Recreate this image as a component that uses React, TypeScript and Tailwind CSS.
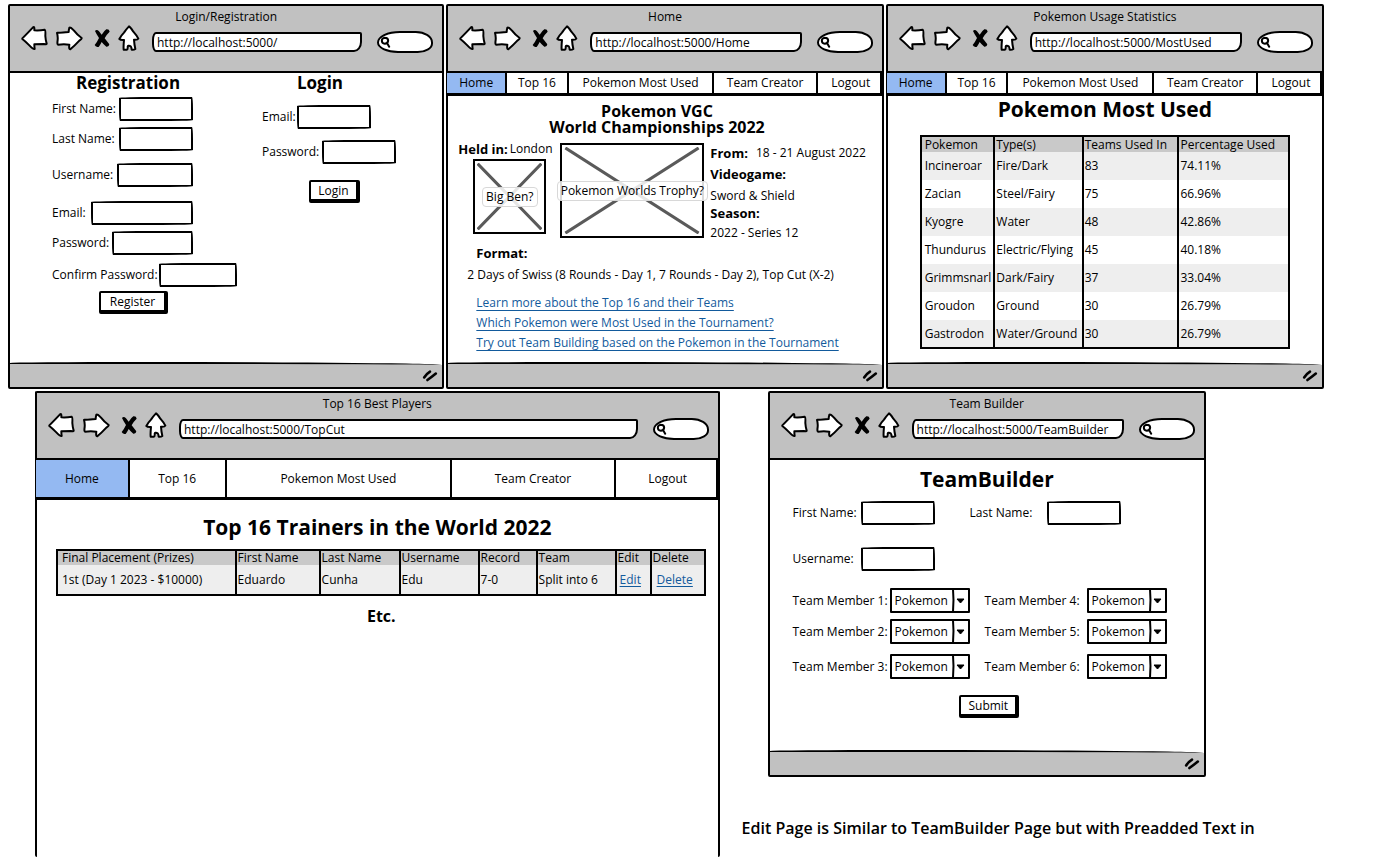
import React, { useId } from "react";

const SKETCH = "rounded-[50%_1px_50%_1px/1px_50%_1px_50%]";

function BackIcon() {
  return (
    <svg viewBox="63 75 81 78" className="h-[26px] w-[27px]" fill="#fff" stroke="#000" strokeWidth="6" strokeLinejoin="round" aria-hidden="true">
      <path d="M67 115 Q86 96 99 82 Q104 78 103 91 Q120 92 134 89 Q137 90 136 108 Q137 122 140 131 Q140 134 132 132 L103 133 Q103 140 104 147 Q100 149 88 136 Q76 124 67 117 Z" />
    </svg>
  );
}

function ForwardIcon() {
  return (
    <svg viewBox="168 75 81 78" className="h-[26px] w-[27px]" fill="#fff" stroke="#000" strokeWidth="6" strokeLinejoin="round" aria-hidden="true">
      <path d="M172 98 Q180 99 206 96 Q206 90 208 83 Q211 80 222 92 Q232 105 245 114 Q246 117 238 122 Q224 137 211 148 Q206 149 208 134 Q192 132 174 134 Q171 134 173 120 Q174 108 171 99 Z" />
    </svg>
  );
}

function StopIcon() {
  return (
    <svg viewBox="282 84 48 54" className="h-[18px] w-4" aria-hidden="true">
      <path d="M285 90 Q290 83 297 91 L305 101 Q312 90 319 85 Q328 84 329 92 Q320 100 314 112 Q321 121 328 130 Q327 138 319 137 Q311 131 305 123 Q300 133 296 138 Q287 139 284 132 Q291 124 297 111 Q289 99 285 90 Z" />
    </svg>
  );
}

function HomeIcon() {
  return (
    <svg viewBox="354 75 66 78" className="h-[26px] w-[22px]" fill="#fff" stroke="#000" strokeWidth="6" strokeLinejoin="round" aria-hidden="true">
      <path d="M387 79 Q392 82 400 95 Q410 106 415 116 Q413 120 402 119 Q403 135 406 147 Q402 150 395 149 Q394 138 390 138 Q384 136 383 140 Q384 148 380 149 L371 149 Q370 140 372 120 Q362 121 358 117 Q364 106 372 98 Q380 86 387 79 Z" />
    </svg>
  );
}

function ResizeGrip() {
  return (
    <svg viewBox="0 0 48 40" className="h-[13px] w-4" stroke="#000" strokeWidth="8" strokeLinecap="round" aria-hidden="true">
      <path d="M6 26 Q14 14 24 8 M16 34 Q30 24 42 14" fill="none" />
    </svg>
  );
}

type BrowserProps = {
  title: string;
  url: string;
  footer?: boolean;
  children: React.ReactNode;
};

function BrowserWindow({ title, url, footer = true, children }: BrowserProps) {
  return (
    <section className={`flex min-w-0 flex-col rounded-[2px] border-2 border-black bg-white ${footer ? "" : "border-b-0"}`}>
      <header className="border-b-2 border-black bg-[#c1c1c1] pb-5">
        <div className="pt-[3px] text-center leading-4">{title}</div>
        <div className="flex h-[26px] items-center pl-[11px] pr-[9px]">
          <button aria-label="Back" className="mr-2"><BackIcon /></button>
          <button aria-label="Forward" className="mr-[11px]"><ForwardIcon /></button>
          <button aria-label="Stop" className="mr-2"><StopIcon /></button>
          <button aria-label="Home" className="mr-3"><HomeIcon /></button>
          <input
            aria-label="Address"
            defaultValue={url}
            className="mr-[15px] mt-2 h-5 min-w-0 flex-1 rounded-[4px_2px_8px_4px/8px_2px_10px_8px] border-2 border-black bg-white pl-[3px] outline-none"
          />
          <div className="mt-2 flex h-[22px] w-14 items-center rounded-[24px_18px_16px_22px/12px_12px_10px_11px] border-2 border-black bg-white pl-px">
            <svg viewBox="0 0 32 36" className="h-3 w-[11px] shrink-0" fill="none" stroke="#000" strokeWidth="6" strokeLinecap="round" aria-hidden="true">
              <path d="M14 5 Q24 5 24 14 Q23 23 14 23 Q5 22 5 14 Q5 6 14 5 M21 22 L27 32" />
            </svg>
            <input aria-label="Search" className="w-9 min-w-0 bg-transparent outline-none" />
          </div>
        </div>
      </header>
      <div className="flex-1">{children}</div>
      {footer && (
        <footer className="flex h-[25px] items-center justify-end rounded-[30%_70%_0_0/1px_3px_0_0] border-t-2 border-black bg-[#c1c1c1] pr-1">
          <ResizeGrip />
        </footer>
      )}
    </section>
  );
}

const NAV_ITEMS = ["Home", "Top 16", "Pokemon Most Used", "Team Creator", "Logout"];

function NavBar({ large = false }: { large?: boolean }) {
  const size = large
    ? "h-10 grid-cols-[94fr_97fr_226fr_164fr_100fr]"
    : "h-[23px] grid-cols-[60fr_62fr_146fr_104fr_62fr]";
  return (
    <nav className={`-mx-[2px] grid divide-x-2 divide-black border-b-[3px] border-l border-r-4 border-black bg-white ${size}`}>
      {NAV_ITEMS.map((item) => (
        <a key={item} href="#" className={`flex items-center justify-center whitespace-nowrap last:pl-1 ${item === "Home" ? "bg-[#94b9f2]" : ""}`}>
          {item}
        </a>
      ))}
    </nav>
  );
}

type FieldProps = { label: string; labelClass: string; inputClass: string; className?: string; type?: string };

function Field({ label, labelClass, inputClass, className = "", type = "text" }: FieldProps) {
  const id = useId();
  return (
    <div className={`flex items-center ${className}`}>
      <label htmlFor={id} className={`shrink-0 whitespace-nowrap ${labelClass}`}>{label}</label>
      <input id={id} type={type} className={`h-6 shrink-0 border-2 border-black bg-white px-1 outline-none ${SKETCH} ${inputClass}`} />
    </div>
  );
}

function SketchButton({ children, className }: { children: string; className: string }) {
  return (
    <button className={`h-[23px] rounded-[2px] border-2 border-b-4 border-r-4 border-black bg-white leading-4 ${className}`}>
      {children}
    </button>
  );
}

function LoginWindow() {
  return (
    <BrowserWindow title="Login/Registration" url="http://localhost:5000/">
      <div className="flex">
        <form className="w-[252px] shrink-0 pl-[42px]">
          <h2 className="w-[152px] text-center text-[17px] font-bold leading-5">Registration</h2>
          <Field label="First Name:" labelClass="w-[67px]" inputClass="w-[74px]" className="mt-1" />
          <Field label="Last Name:" labelClass="w-[67px]" inputClass="w-[74px]" className="mt-[6px]" />
          <Field label="Username:" labelClass="w-[65px]" inputClass="w-[76px]" className="mt-3" />
          <Field label="Email:" labelClass="w-[39px]" inputClass="w-[102px]" className="mt-[14px]" />
          <Field label="Password:" labelClass="w-[60px]" inputClass="w-[81px]" className="mt-[6px]" type="password" />
          <Field label="Confirm Password:" labelClass="w-[107px]" inputClass="w-[78px]" className="mt-2" type="password" />
          <SketchButton className="ml-[47px] mt-1 block w-[69px]">Register</SketchButton>
        </form>
        <form>
          <h2 className="w-[116px] text-center text-[17px] font-bold leading-5">Login</h2>
          <Field label="Email:" labelClass="w-[35px]" inputClass="w-[74px]" className="mt-3" />
          <Field label="Password:" labelClass="w-[60px]" inputClass="w-[74px]" className="mt-[11px]" type="password" />
          <SketchButton className="ml-[47px] mt-4 block w-[51px]">Login</SketchButton>
        </form>
      </div>
    </BrowserWindow>
  );
}

function ImagePlaceholder({ caption, className }: { caption: string; className: string }) {
  return (
    <figure className={`relative flex items-center justify-center border-2 border-black bg-white ${className}`}>
      <svg viewBox="0 0 100 100" preserveAspectRatio="none" className="absolute inset-[2px] h-[calc(100%-4px)] w-[calc(100%-4px)]" stroke="#5a5a5a" strokeWidth="3" aria-hidden="true">
        <path d="M1 1 L99 99 M99 1 L1 99" vectorEffect="non-scaling-stroke" />
      </svg>
      <figcaption className="absolute whitespace-nowrap rounded-[4px] border border-[#d8d8d8] bg-white/85 px-[3px] leading-[18px]">{caption}</figcaption>
    </figure>
  );
}

const HOME_LINKS = [
  "Learn more about the Top 16 and their Teams",
  "Which Pokemon were Most Used in the Tournament?",
  "Try out Team Building based on the Pokemon in the Tournament",
];

function HomeWindow() {
  return (
    <BrowserWindow title="Home" url="http://localhost:5000/Home">
      <NavBar />
      <h1 className="pr-4 pt-[7px] text-center text-base font-bold leading-4">
        Pokemon VGC<br />World Championships 2022
      </h1>
      <div className="flex pl-[10px] pt-2">
        <div className="w-[102px] shrink-0">
          <div className="mb-1 flex gap-[2px] whitespace-nowrap leading-3"><b className="text-[13px] leading-3">Held in:</b><span>London</span></div>
          <ImagePlaceholder caption="Big Ben?" className="ml-[15px] h-[75px] w-[73px]" />
        </div>
        <ImagePlaceholder caption="Pokemon Worlds Trophy?" className="h-[95px] w-36 shrink-0" />
        <div className="whitespace-nowrap pl-[6px] leading-4">
          <div className="mt-[2px] flex gap-2"><b className="text-[13px] leading-4">From:</b><span>18 - 21 August 2022</span></div>
          <b className="mt-[5px] block text-[13px] leading-4">Videogame:</b>
          <p className="mt-[6px]">Sword &amp; Shield</p>
          <b className="mt-px block text-[13px] leading-4">Season:</b>
          <p className="mt-1">2022 - Series 12</p>
        </div>
      </div>
      <b className="mt-1 block pl-7 text-[13px] leading-4">Format:</b>
      <p className="mt-[6px] whitespace-nowrap pl-[19px] leading-4">2 Days of Swiss (8 Rounds - Day 1, 7 Rounds - Day 2), Top Cut (X-2)</p>
      <ul className="mt-[10px] pl-7 leading-5">
        {HOME_LINKS.map((text) => (
          <li key={text}><a href="#" className="whitespace-nowrap text-[#125a9c] underline underline-offset-[3px]">{text}</a></li>
        ))}
      </ul>
    </BrowserWindow>
  );
}

const USAGE = [
  ["Incineroar", "Fire/Dark", "83", "74.11%"],
  ["Zacian", "Steel/Fairy", "75", "66.96%"],
  ["Kyogre", "Water", "48", "42.86%"],
  ["Thundurus", "Electric/Flying", "45", "40.18%"],
  ["Grimmsnarl", "Dark/Fairy", "37", "33.04%"],
  ["Groudon", "Ground", "30", "26.79%"],
  ["Gastrodon", "Water/Ground", "30", "26.79%"],
];

function UsageWindow() {
  return (
    <BrowserWindow title="Pokemon Usage Statistics" url="http://localhost:5000/MostUsed">
      <NavBar />
      <h1 className="pt-px text-center text-[21px] font-bold leading-6">Pokemon Most Used</h1>
      <div className="pb-[13px] pl-8 pr-8 pt-[14px]">
        <table className="w-full table-fixed border-collapse border-2 border-black text-left">
          <colgroup><col className="w-[20%]" /><col className="w-[24%]" /><col className="w-[26%]" /><col className="w-[30%]" /></colgroup>
          <thead>
            <tr className="h-4 bg-[#c9c9c9]">
              {["Pokemon", "Type(s)", "Teams Used In", "Percentage Used"].map((h) => (
                <th key={h} scope="col" className="whitespace-nowrap border-x-2 border-black p-0 pl-px font-normal leading-[14px] first:pl-[3px]">{h}</th>
              ))}
            </tr>
          </thead>
          <tbody>
            {USAGE.map((row) => (
              <tr key={row[0]} className="h-7 odd:bg-[#eee]">
                {row.map((cell, i) => (
                  <td key={i} className="whitespace-nowrap border-x-2 border-black p-0 pl-px first:pl-[3px]">{cell}</td>
                ))}
              </tr>
            ))}
          </tbody>
        </table>
      </div>
    </BrowserWindow>
  );
}

const PLAYER_COLUMNS = ["Final Placement (Prizes)", "First Name", "Last Name", "Username", "Record", "Team", "Edit", "Delete"];
const PLAYER = ["1st (Day 1 2023 - $10000)", "Eduardo", "Cunha", "Edu", "7-0", "Split into 6"];

function PlayersWindow() {
  return (
    <BrowserWindow title="Top 16 Best Players" url="http://localhost:5000/TopCut" footer={false}>
      <NavBar large />
      <h1 className="pt-[13px] text-center text-[21px] font-bold leading-7">Top 16 Trainers in the World 2022</h1>
      <div className="pl-[19px] pr-3 pt-2">
        <table className="w-full table-fixed border-collapse border-2 border-black text-left">
          <colgroup>
            <col /><col className="w-[84px]" /><col className="w-20" /><col className="w-[79px]" />
            <col className="w-[58px]" /><col className="w-[79px]" /><col className="w-[35px]" /><col className="w-[54px]" />
          </colgroup>
          <thead>
            <tr className="h-[15px] bg-[#c9c9c9]">
              {PLAYER_COLUMNS.map((h) => (
                <th key={h} scope="col" className="whitespace-nowrap border-x-2 border-black p-0 pl-px font-normal leading-[14px] first:pl-1">{h}</th>
              ))}
            </tr>
          </thead>
          <tbody>
            <tr className="h-[30px] bg-[#eee]">
              {PLAYER.map((cell) => (
                <td key={cell} className="whitespace-nowrap border-x-2 border-black p-0 pl-px first:pl-1">{cell}</td>
              ))}
              {["Edit", "Delete"].map((cell) => (
                <td key={cell} className="border-x-2 border-black p-0 pl-[3px] last:pl-[5px]">
                  <a href="#" className="text-[#125a9c] underline underline-offset-2">{cell}</a>
                </td>
              ))}
            </tr>
          </tbody>
        </table>
      </div>
      <p className="pl-2 pt-[10px] text-center text-base font-bold leading-5">Etc.</p>
    </BrowserWindow>
  );
}

function MemberSelect({ index, labelClass }: { index: number; labelClass: string }) {
  const id = useId();
  return (
    <div className="flex items-center">
      <label htmlFor={id} className={`shrink-0 whitespace-nowrap ${labelClass}`}>Team Member {index}:</label>
      <div className="relative shrink-0">
        <select id={id} className="block h-[25px] w-20 appearance-none rounded-[1px] border-2 border-black bg-white pl-[3px] outline-none">
          <option>Pokemon</option>
        </select>
        <svg viewBox="0 0 18 25" className="pointer-events-none absolute right-0 top-0 h-[25px] w-[18px]" aria-hidden="true">
          <path d="M1 1 Q2 12 1 24" fill="none" stroke="#000" strokeWidth="2" />
          <path d="M5 11 L12 11 L8.5 15 Z" stroke="#000" strokeLinejoin="round" />
        </svg>
      </div>
    </div>
  );
}

function TeamBuilderWindow() {
  return (
    <BrowserWindow title="Team Builder" url="http://localhost:5000/TeamBuilder">
      <form className="pl-[23px]">
        <h1 className="pr-[23px] pt-[5px] text-center text-[21px] font-bold leading-7">TeamBuilder</h1>
        <div className="mt-2 flex gap-[35px]">
          <Field label="First Name:" labelClass="w-[68px]" inputClass="w-[74px]" />
          <Field label="Last Name:" labelClass="w-[77px]" inputClass="w-[74px]" />
        </div>
        <Field label="Username:" labelClass="w-[68px]" inputClass="w-[74px]" className="mt-[22px]" />
        <div className="mt-[17px] flex gap-[15px]">
          <MemberSelect index={1} labelClass="w-[97px]" />
          <MemberSelect index={4} labelClass="w-[102px]" />
        </div>
        <div className="mt-[6px] flex gap-[15px]">
          <MemberSelect index={2} labelClass="w-[97px]" />
          <MemberSelect index={5} labelClass="w-[102px]" />
        </div>
        <div className="mt-[10px] flex gap-[15px]">
          <MemberSelect index={3} labelClass="w-[97px]" />
          <MemberSelect index={6} labelClass="w-[102px]" />
        </div>
        <div className="flex justify-center pb-8 pr-[18px] pt-4">
          <SketchButton className="w-[60px]">Submit</SketchButton>
        </div>
      </form>
    </BrowserWindow>
  );
}

export default function App() {
  return (
    <main className="flex min-h-screen flex-col gap-[2px] overflow-x-hidden bg-white pt-1 font-['Open_Sans',sans-serif] text-[12px] text-black">
      <div className="grid min-h-[385px] grid-cols-[436fr_437fr_438fr] gap-[2px] pl-2 pr-16">
        <LoginWindow />
        <HomeWindow />
        <UsageWindow />
      </div>
      <div className="grid flex-1 grid-cols-[684fr_438fr] gap-12 pl-[35px] pr-[182px]">
        <PlayersWindow />
        <div className="flex min-w-0 flex-col">
          <TeamBuilderWindow />
          <p className="-ml-[26px] mt-[41px] whitespace-nowrap text-base font-semibold leading-5">
            Edit Page is Similar to TeamBuilder Page but with Preadded Text in
          </p>
        </div>
      </div>
    </main>
  );
}
